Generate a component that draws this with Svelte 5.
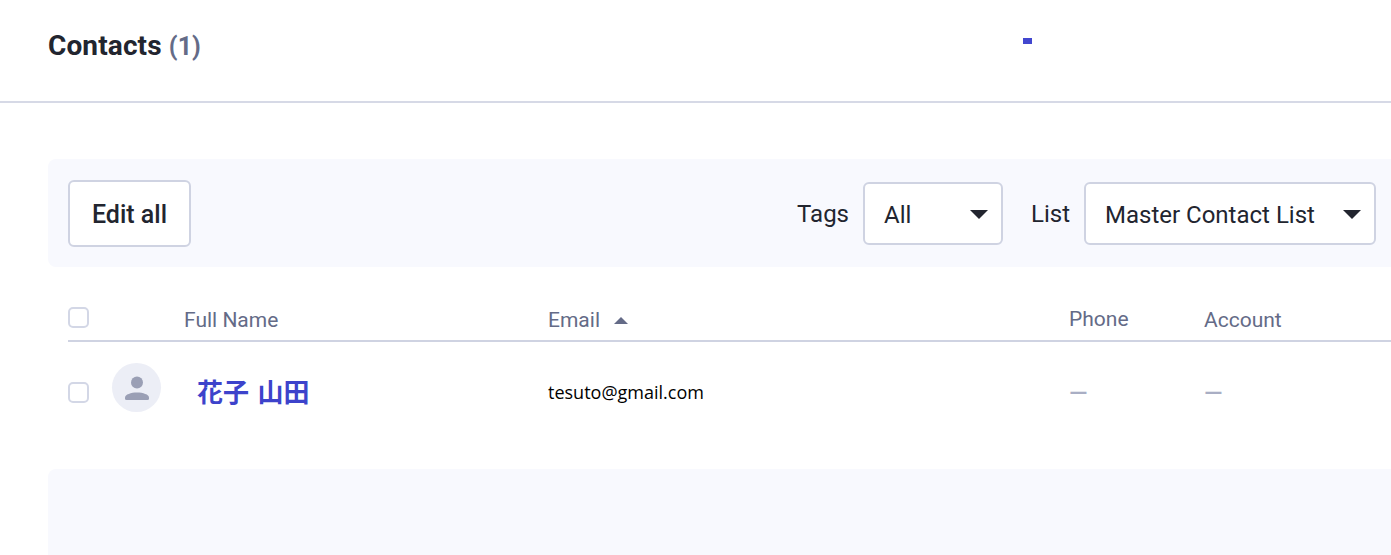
<script>
  const columns = [
    { label: "Full Name", cls: "name" },
    { label: "Email", cls: "email", sorted: true },
    { label: "Phone", cls: "phone" },
    { label: "Account", cls: "account" },
  ];
</script>

<div class="page">
  <header class="top">
    <h1>Contacts <span class="count">(1)</span></h1>
    <span class="loader"></span>
  </header>

  <main class="content">
    <section class="toolbar">
      <button class="edit">Edit all</button>
      <div class="filters">
        <span class="label">Tags</span>
        <div class="select tags">
          <span>All</span>
          <i class="caret"></i>
        </div>
        <span class="label list-label">List</span>
        <div class="select list">
          <span>Master Contact List</span>
          <i class="caret"></i>
        </div>
      </div>
    </section>

    <section class="table">
      <div class="row head">
        <div class="cell check"><span class="box"></span></div>
        {#each columns as col}
          <div class="cell {col.cls}">
            {col.label}
            {#if col.sorted}<i class="sort"></i>{/if}
          </div>
        {/each}
      </div>
      <div class="row body">
        <div class="cell check">
          <span class="box"></span>
          <span class="avatar">
            <svg viewBox="0 0 24 24" width="24" height="24">
              <circle cx="12" cy="6.600" r="6" fill="#9a9fb5" />
              <path d="M0 21.500c0-3 6-5 12-5s12 2 12 5v1a1.500 1.500 0 0 1-1.500 1.500H1.500A1.500 1.500 0 0 1 0 22.500z" fill="#9a9fb5" />
            </svg>
          </span>
        </div>
        <div class="cell name"><a href="#top">花子 山田</a></div>
        <div class="cell email">tesuto@gmail.com</div>
        <div class="cell phone dash">—</div>
        <div class="cell account dash">—</div>
      </div>
    </section>

    <section class="footer-band"></section>
  </main>
</div>

<style>
  :global(body) {
    margin: 0;
    background: #fff;
    overflow: hidden;
  }

  .page {
    width: 1391px;
    height: 555px;
    overflow: hidden;
    font-family: "Roboto", "Noto Sans CJK JP", sans-serif;
    color: #22252f;
  }

  .top {
    height: 101px;
    border-bottom: 2px solid #d6d9e6;
    padding-left: 48px;
    display: flex;
    position: relative;
  }

  h1 {
    margin: 28px 0 0;
    font-size: 28px;
    line-height: 36px;
    font-weight: 700;
    letter-spacing: 0.12px;
  }

  .count {
    color: #646b87;
    font-size: 25px;
  }

  .loader {
    position: absolute;
    left: 1023px;
    top: 38px;
    width: 9px;
    height: 6px;
    background: #4247cf;
  }

  .content {
    padding: 56px 0 0 48px;
  }

  .toolbar {
    height: 108px;
    box-sizing: border-box;
    background: #f8f9fe;
    border-radius: 8px 0 0 8px;
    display: flex;
    align-items: center;
    justify-content: space-between;
    padding: 1px 15px 0 20px;
  }

  .edit {
    width: 123px;
    height: 67px;
    box-sizing: border-box;
    background: #fff;
    border: 2px solid #cfd3e2;
    border-radius: 6px;
    font: 500 25px "Roboto", sans-serif;
    color: #22252f;
    padding: 2px 0 0;
  }

  .filters {
    display: flex;
    align-items: center;
    font-size: 24px;
  }

  .label {
    margin-right: 14px;
  }

  .list-label {
    margin-left: 28px;
  }

  .select {
    height: 63px;
    box-sizing: border-box;
    background: #fff;
    border: 2px solid #cfd3e2;
    border-radius: 6px;
    display: flex;
    align-items: center;
    justify-content: space-between;
    padding: 2px 13px 0 19px;
  }

  .tags {
    width: 140px;
  }

  .list {
    width: 292px;
  }

  .caret {
    width: 0;
    height: 0;
    border-left: 9px solid transparent;
    border-right: 9px solid transparent;
    border-top: 9px solid #22252f;
  }

  .table {
    margin-left: 20px;
    margin-top: 29px;
  }

  .row {
    display: flex;
  }

  .head {
    height: 44px;
    border-bottom: 2px solid #cfd3e2;
    color: #646b87;
    font-size: 21px;
    align-items: flex-start;
  }

  .head .cell {
    padding-top: 11px;
    line-height: 26px;
  }

  .head .check {
    padding-top: 0;
  }

  .head .box {
    margin-top: 11px;
  }

  .body {
    height: 102px;
    align-items: center;
  }

  .body .cell {
    margin-top: -1px;
  }

  .cell {
    box-sizing: border-box;
  }

  .check {
    width: 116px;
    display: flex;
    align-items: center;
  }

  .box {
    display: block;
    width: 21px;
    height: 21px;
    box-sizing: border-box;
    border: 2px solid #d3d7e6;
    border-radius: 5px;
    background: #fff;
  }

  .avatar {
    width: 49px;
    height: 49px;
    margin: 0 0 10px 23px;
    border-radius: 50%;
    background: #eceef6;
    display: flex;
    align-items: center;
    justify-content: center;
    flex: none;
  }

  .name {
    width: 364px;
  }

  .body .name {
    padding-bottom: 4px;
  }

  .name a {
    color: #3d43cb;
    text-decoration: none;
    font-size: 26px;
    font-weight: 700;
    word-spacing: 2px;
    margin-left: 13px;
  }

  .email {
    width: 521px;
    display: flex;
    align-items: center;
  }

  .body .email {
    font-family: "Open Sans", sans-serif;
    font-size: 18px;
    color: #000;
    padding-bottom: 2px;
  }

  .sort {
    display: inline-block;
    margin-left: 14px;
    width: 0;
    height: 0;
    border-left: 7px solid transparent;
    border-right: 7px solid transparent;
    border-bottom: 7px solid #646b87;
  }

  .phone {
    width: 135px;
  }

  .head .phone {
    margin-top: -1px;
  }

  .account {
    width: 180px;
  }

  .dash {
    color: #a9aec4;
    font-size: 24px;
    font-weight: 500;
  }

  .footer-band {
    margin-top: 25px;
    height: 120px;
    background: #f8f9fe;
    border-radius: 8px 0 0 0;
  }
</style>
